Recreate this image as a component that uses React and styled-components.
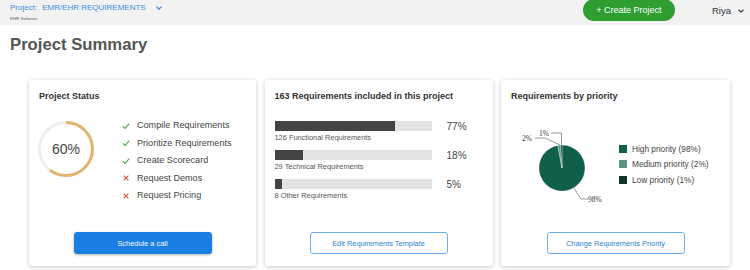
import React from "react";
import styled, { createGlobalStyle } from "styled-components";

const GlobalStyle = createGlobalStyle`
  body {
    margin: 0;
    background: #fff;
    font-family: "Liberation Sans", Arial, sans-serif;
    color: #444;
  }
`;

const Page = styled.div`
  width: 750px;
  height: 270px;
  overflow: hidden;
`;

const TopBar = styled.div`
  display: flex;
  justify-content: space-between;
  align-items: flex-start;
  height: 25px;
  background: #f2f2f2;
  padding: 0 5px 0 10px;
  box-sizing: border-box;
`;

const ProjectPicker = styled.div`
  display: flex;
  flex-direction: column;
  padding-top: 2px;
`;

const ProjectLine = styled.div`
  display: flex;
  align-items: center;
  color: #3a8ee6;
  font-size: 8px;
  line-height: 11px;
  white-space: nowrap;
`;

const ProjectName = styled.span`
  margin-left: 5px;
`;

const SubName = styled.div`
  font-size: 4.4px;
  color: #666;
  margin-top: 3px;
  line-height: 6px;
`;

const RightSide = styled.div`
  display: flex;
  align-items: center;
`;

const CreateButton = styled.button`
  height: 22px;
  width: 92px;
  margin-top: -1px;
  border: none;
  border-radius: 11px;
  background: #2e9e30;
  color: #fff;
  font-family: inherit;
  font-size: 9px;
  padding: 0;
`;

const UserName = styled.div`
  display: flex;
  align-items: center;
  margin-left: 37px;
  font-size: 9.5px;
  color: #333;
  line-height: 20px;
`;

const Heading = styled.h1`
  margin: 9px 0 0 10px;
  font-size: 16.7px;
  line-height: 22px;
  color: #555;
  font-weight: bold;
`;

const CardRow = styled.div`
  display: grid;
  grid-template-columns: 227px 228px 229px;
  column-gap: 8.5px;
  margin: 24px 0 0 29px;
`;

const Card = styled.div`
  height: 186px;
  background: #fff;
  border-radius: 3px;
  box-shadow: 0 1px 4px rgba(0, 0, 0, 0.22);
  display: flex;
  flex-direction: column;
  padding: 9px 10px 12px;
  box-sizing: border-box;
`;

const CardTitle = styled.div`
  font-size: 9px;
  line-height: 14px;
  font-weight: bold;
  color: #333;
  white-space: nowrap;
`;

const CardBody = styled.div`
  flex: 1;
  display: flex;
  align-items: ${p => p.align || "flex-start"};
  flex-direction: ${p => (p.column ? "column" : "row")};
`;

const CardFooter = styled.div`
  display: flex;
  justify-content: center;
`;

const ActionButton = styled.button`
  width: 138px;
  height: 22px;
  border-radius: 3px;
  font-family: inherit;
  font-size: 7.4px;
  padding: 0;
  cursor: pointer;
  border: 1px solid ${p => (p.primary ? "#1a7fe2" : "#6aaef0")};
  background: ${p => (p.primary ? "#1a7fe2" : "#fff")};
  color: ${p => (p.primary ? "#fff" : "#2a82d8")};
  box-shadow: ${p => (p.primary ? "0 1px 3px rgba(0,0,0,0.3)" : "none")};
`;

const Ring = styled.div`
  position: relative;
  width: 56px;
  height: 56px;
  margin: 18px 0 0 -1px;
  flex-shrink: 0;
`;

const RingLabel = styled.div`
  position: absolute;
  inset: 0;
  display: flex;
  align-items: center;
  justify-content: center;
  font-size: 14px;
  color: #444;
`;

const Steps = styled.ul`
  list-style: none;
  margin: 14px 0 0 28px;
  padding: 0;
`;

const Step = styled.li`
  display: flex;
  align-items: center;
  font-size: 9.1px;
  line-height: 17.5px;
  color: #444;
  white-space: nowrap;
`;

const StepIcon = styled.span`
  display: inline-flex;
  width: 8px;
  margin-right: 7px;
`;

const BarList = styled.div`
  margin-top: 18px;
  display: flex;
  flex-direction: column;
  gap: 6px;
`;

const BarRow = styled.div`
  display: flex;
  align-items: flex-start;
`;

const BarCol = styled.div`
  width: 157px;
`;

const Track = styled.div`
  height: 10px;
  background: #e4e4e4;
`;

const Fill = styled.div`
  height: 100%;
  background: #444;
`;

const BarLabel = styled.div`
  font-size: 7.4px;
  line-height: 13px;
  color: #555;
  white-space: nowrap;
`;

const BarPct = styled.div`
  margin-left: 15px;
  font-size: 10px;
  line-height: 11px;
  color: #444;
`;

const Legend = styled.div`
  display: flex;
  flex-direction: column;
  gap: 3.5px;
  margin: 0 0 7px 4px;
`;

const LegendItem = styled.div`
  display: flex;
  align-items: center;
  font-size: 8.3px;
  line-height: 12px;
  color: #444;
  white-space: nowrap;
`;

const Swatch = styled.span`
  width: 8px;
  height: 8px;
  margin-right: 5px;
  background: ${p => p.color};
`;

const Chevron = ({ color, size = 8, gap = 8 }) => (
  <svg width={size} height={size} viewBox="0 0 10 10" style={{ marginLeft: gap }}>
    <path d="M2 3.5 L5 6.5 L8 3.5" fill="none" stroke={color} strokeWidth="1.6" />
  </svg>
);

const Check = () => (
  <svg width="8" height="8" viewBox="0 0 10 10">
    <path d="M1 5.5 L3.8 8 L9 2" fill="none" stroke="#43a943" strokeWidth="1.3" />
  </svg>
);

const Cross = () => (
  <svg width="8" height="8" viewBox="0 0 10 10">
    <path d="M2 2 L8 8 M8 2 L2 8" fill="none" stroke="#ef4b3c" strokeWidth="1.3" />
  </svg>
);

const steps = [
  { label: "Compile Requirements", done: true },
  { label: "Prioritize Requirements", done: true },
  { label: "Create Scorecard", done: true },
  { label: "Request Demos", done: false },
  { label: "Request Pricing", done: false }
];

const bars = [
  { pct: 77, label: "126 Functional Requirements" },
  { pct: 18, label: "29 Technical Requirements" },
  { pct: 5, label: "8 Other Requirements" }
];

const priorities = [
  { label: "High priority (98%)", color: "#105f4b", value: 98 },
  { label: "Medium priority (2%)", color: "#5b9585", value: 2 },
  { label: "Low priority (1%)", color: "#0c3528", value: 1 }
];

function ProgressRing({ pct }) {
  const r = 26.5;
  const c = 2 * Math.PI * r;
  return (
    <Ring>
      <svg width="56" height="56" viewBox="0 0 56 56">
        <circle cx="28" cy="28" r={r} fill="none" stroke="#eeeeee" strokeWidth="3" />
        <circle
          cx="28"
          cy="28"
          r={r}
          fill="none"
          stroke="#e2b46e"
          strokeWidth="3"
          strokeDasharray={`${(c * pct) / 100} ${c}`}
          transform="rotate(-90 28 28)"
        />
      </svg>
      <RingLabel>{pct}%</RingLabel>
    </Ring>
  );
}

function Pie() {
  const cx = 47;
  const cy = 40;
  const r = 23;
  const total = priorities.reduce((s, p) => s + p.value, 0);
  let start = 0;
  const point = a => [cx + r * Math.sin(a), cy - r * Math.cos(a)];
  const slices = priorities.map(p => {
    const end = start + (p.value / total) * Math.PI * 2;
    const [x1, y1] = point(start);
    const [x2, y2] = point(end);
    const large = end - start > Math.PI ? 1 : 0;
    const d = `M${cx} ${cy} L${x1} ${y1} A${r} ${r} 0 ${large} 1 ${x2} ${y2} Z`;
    start = end;
    return <path key={p.label} d={d} fill={p.color} stroke="#fff" strokeWidth="0.3" />;
  });
  return (
    <svg width="100" height="84" viewBox="0 0 100 84" style={{ marginLeft: 4, marginTop: 4 }}>
      {slices}
      <g fill="none" stroke="#6f6f6f" strokeWidth="0.7">
        <polyline points="36,5 46.5,5 46.5,17" />
        <polyline points="20,10 30,10 45,17" />
        <polyline points="59,60 66,71 73,71" />
      </g>
      <g fontFamily="'Liberation Serif', serif" fontSize="7.5" fill="#333">
        <text x="24" y="8">1%</text>
        <text x="7" y="13">2%</text>
        <text x="73" y="73.5">98%</text>
      </g>
    </svg>
  );
}

export default function App() {
  return (
    <Page>
      <GlobalStyle />
      <TopBar>
        <ProjectPicker>
          <ProjectLine>
            Project:
            <ProjectName>EMR/EHR REQUIREMENTS</ProjectName>
            <Chevron color="#3a8ee6" gap={9} />
          </ProjectLine>
          <SubName>EHR Software</SubName>
        </ProjectPicker>
        <RightSide>
          <CreateButton>+ Create Project</CreateButton>
          <UserName>
            Riya
            <Chevron color="#444" gap={6} />
          </UserName>
        </RightSide>
      </TopBar>
      <Heading>Project Summary</Heading>
      <CardRow>
        <Card>
          <CardTitle>Project Status</CardTitle>
          <CardBody>
            <ProgressRing pct={60} />
            <Steps>
              {steps.map(s => (
                <Step key={s.label}>
                  <StepIcon>{s.done ? <Check /> : <Cross />}</StepIcon>
                  {s.label}
                </Step>
              ))}
            </Steps>
          </CardBody>
          <CardFooter>
            <ActionButton primary>Schedule a call</ActionButton>
          </CardFooter>
        </Card>
        <Card>
          <CardTitle>163 Requirements included in this project</CardTitle>
          <CardBody column>
            <BarList>
              {bars.map(b => (
                <BarRow key={b.label}>
                  <BarCol>
                    <Track>
                      <Fill style={{ width: `${b.pct}%` }} />
                    </Track>
                    <BarLabel>{b.label}</BarLabel>
                  </BarCol>
                  <BarPct>{b.pct}%</BarPct>
                </BarRow>
              ))}
            </BarList>
          </CardBody>
          <CardFooter>
            <ActionButton>Edit Requirements Template</ActionButton>
          </CardFooter>
        </Card>
        <Card>
          <CardTitle>Requirements by priority</CardTitle>
          <CardBody align="center">
            <Pie />
            <Legend>
              {priorities.map(p => (
                <LegendItem key={p.label}>
                  <Swatch color={p.color} />
                  {p.label}
                </LegendItem>
              ))}
            </Legend>
          </CardBody>
          <CardFooter>
            <ActionButton>Change Requirements Priority</ActionButton>
          </CardFooter>
        </Card>
      </CardRow>
    </Page>
  );
}
